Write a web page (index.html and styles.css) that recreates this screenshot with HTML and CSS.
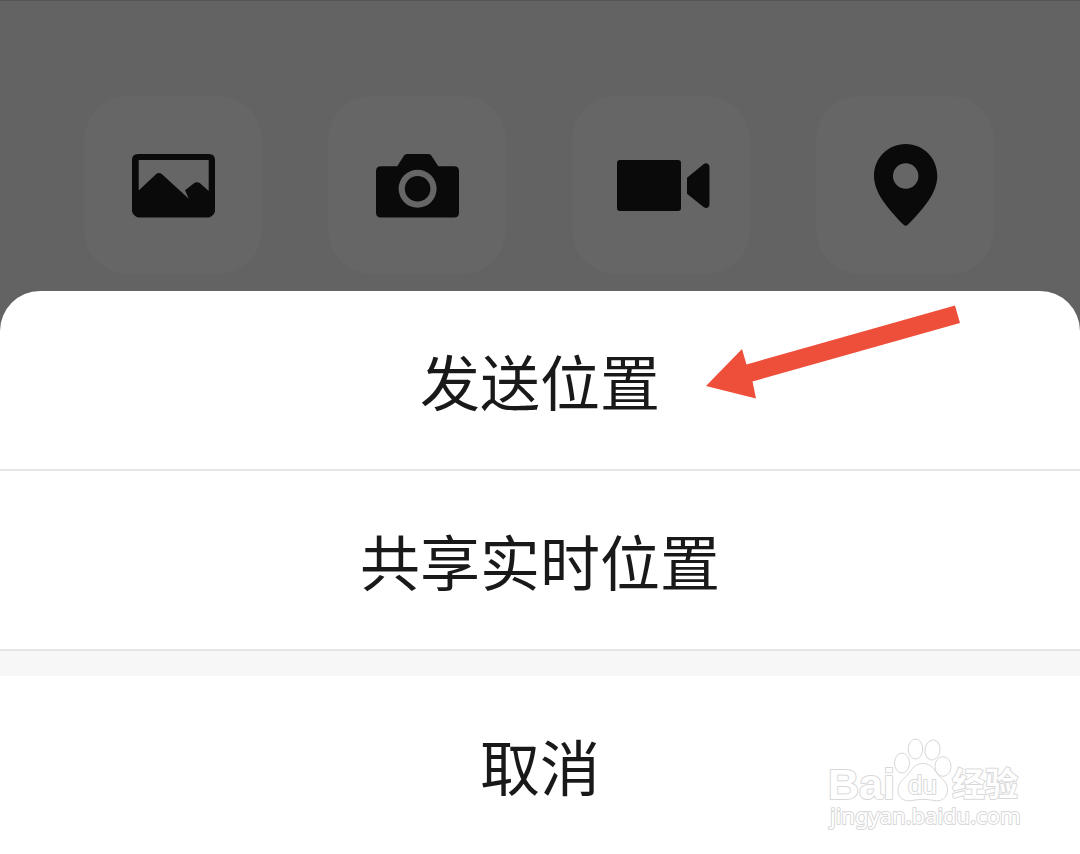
FILE: index.html
```html
<!DOCTYPE html>
<html lang="zh-CN">
<head>
    <meta charset="UTF-8">
    <meta name="viewport" content="width=device-width, initial-scale=1.0">
    <title>发送位置</title>
    <link rel="stylesheet" href="styles.css">
</head>
<body>
    <div class="panel">
        <button type="button" class="tile" aria-label="相册">
            <svg viewBox="0 0 178 178">
                <path fill-rule="evenodd" d="M54 58H125Q131 58 131 64V115.500Q129.500 120 125 121.500H54Q49.500 120 48 115.500V64Q48 58 54 58ZM54.700 64V94.500L72 78.300Q75 75.700 78 78.300L104.800 102.800L101 94.200L110 87.300Q113 85 116 87.300L124.700 95V64Z"/>
            </svg>
        </button>
        <button type="button" class="tile" aria-label="拍摄">
            <svg viewBox="0 0 178 178">
                <path fill-rule="evenodd" d="M53 70.300H69.300L76 59.500Q77 58 79 58H100.500Q102.300 58 103.300 59.500L110.300 70.300H126Q131 70.300 131 75.300V116.500Q131 121.500 126 121.500H53Q48 121.500 48 116.500V75.300Q48 70.300 53 70.300ZM89.600 73.700A19 19 0 1 0 89.600 111.700A19 19 0 1 0 89.600 73.700Z"/>
                <circle cx="89.600" cy="92.700" r="12.800"/>
            </svg>
        </button>
        <button type="button" class="tile" aria-label="视频通话">
            <svg viewBox="0 0 178 178">
                <rect x="45" y="64" width="64" height="51" rx="3"/>
                <path d="M115 81.700L131.500 68.200Q134 66.500 136 68Q137.500 69 137.500 71V108Q137.500 110.500 136 111.500Q134 112.500 131.500 111L115 97.700Z"/>
            </svg>
        </button>
        <button type="button" class="tile" aria-label="位置">
            <svg viewBox="0 0 178 178">
                <path fill-rule="evenodd" d="M89.700 48C107.500 48 121.300 62 121.300 80C121.300 97 107 113.500 91.800 128.800Q89.700 130.900 87.600 128.800C72.500 113.500 58 97 58 80C58 62 72 48 89.700 48ZM89.700 67.300A12.700 12.700 0 1 0 89.700 92.700A12.700 12.700 0 1 0 89.700 67.300Z"/>
            </svg>
        </button>
    </div>

    <div class="sheet">
        <button type="button" class="option">发送位置
            <svg class="arrow" viewBox="0 0 256 96">
                <path d="M1 81L37 44L41.500 59.500L250 0.500L255 18L47.500 76.500L51 93.500Z"/>
            </svg>
        </button>
        <button type="button" class="option">共享实时位置</button>
        <div class="divider"></div>
        <button type="button" class="cancel">取消</button>
        <svg class="watermark" viewBox="0 0 220 110">
            <ellipse cx="87" cy="33" rx="7.500" ry="10"/>
            <ellipse cx="100.500" cy="19" rx="7.300" ry="10"/>
            <ellipse cx="117.500" cy="20" rx="7.500" ry="10" transform="rotate(8 117.500 20)"/>
            <ellipse cx="128" cy="36.500" rx="8" ry="9.800"/>
            <path d="M108 33.500C116 33.500 119 39 122.500 44C127 49.500 132.500 52 132.500 60C132.500 68 126 72 119 70.500C112 69 104 69 97 70.500C89 72 83 68 83 60C83 52 89 49.500 93.500 44C97 39 100 33.500 108 33.500Z"/>
            <text class="brand" x="13" y="69">Bai</text>
            <text class="du" x="93" y="64">du</text>
            <text class="cjk" x="137" y="66">经验</text>
            <text class="site" x="15" y="94">jingyan.baidu.com</text>
        </svg>
    </div>
</body>
</html>
```
FILE: styles.css
```css
* {
    margin: 0;
    padding: 0;
    box-sizing: border-box;
}

body {
    background-color: #636363;
    font-family: "Noto Sans CJK SC", sans-serif;
    min-height: 100vh;
    display: flex;
    flex-direction: column;
}

button {
    border: none;
    font-family: inherit;
    cursor: pointer;
}

/* Attachment tiles */
.panel {
    display: grid;
    grid-template-columns: repeat(4, 1fr);
    gap: 66px;
    padding: 95px 86px 17px 84px;
    border-top: 1px solid #555;
}

.tile {
    aspect-ratio: 1;
    border-radius: 44px;
    background-color: #666;
}

.tile svg {
    display: block;
    width: 100%;
    fill: #0a0a0a;
}

/* Bottom sheet */
.sheet {
    position: relative;
    flex: 1;
    display: flex;
    flex-direction: column;
    background-color: #fff;
    border-radius: 40px 40px 0 0;
    overflow: hidden;
}

.option,
.cancel {
    position: relative;
    padding: 45px 20px;
    background: none;
    color: #191919;
    font-size: 60px;
    line-height: 88px;
    text-align: center;
}

.option {
    border-bottom: 2px solid #e5e5e5;
}

.divider {
    height: 25px;
    background-color: #f7f7f7;
}

.arrow {
    position: absolute;
    top: 14px;
    left: calc(50% + 165px);
    width: 256px;
    fill: #ed4f3a;
}

/* Watermark */
.watermark {
    position: absolute;
    right: 45px;
    bottom: 14px;
    width: 220px;
    fill: #fff;
    stroke: #d8d8d8;
    stroke-width: 1px;
    stroke-linejoin: round;
    pointer-events: none;
}

.watermark text {
    paint-order: stroke;
    stroke-width: 2px;
}

.brand {
    font-family: "Liberation Sans", sans-serif;
    font-size: 43px;
    font-weight: bold;
}

.du {
    font-family: "Liberation Sans", sans-serif;
    font-size: 26px;
}

.cjk {
    font-size: 33px;
    font-weight: bold;
}

.site {
    font-family: "Noto Sans", sans-serif;
    font-size: 22px;
}
```
